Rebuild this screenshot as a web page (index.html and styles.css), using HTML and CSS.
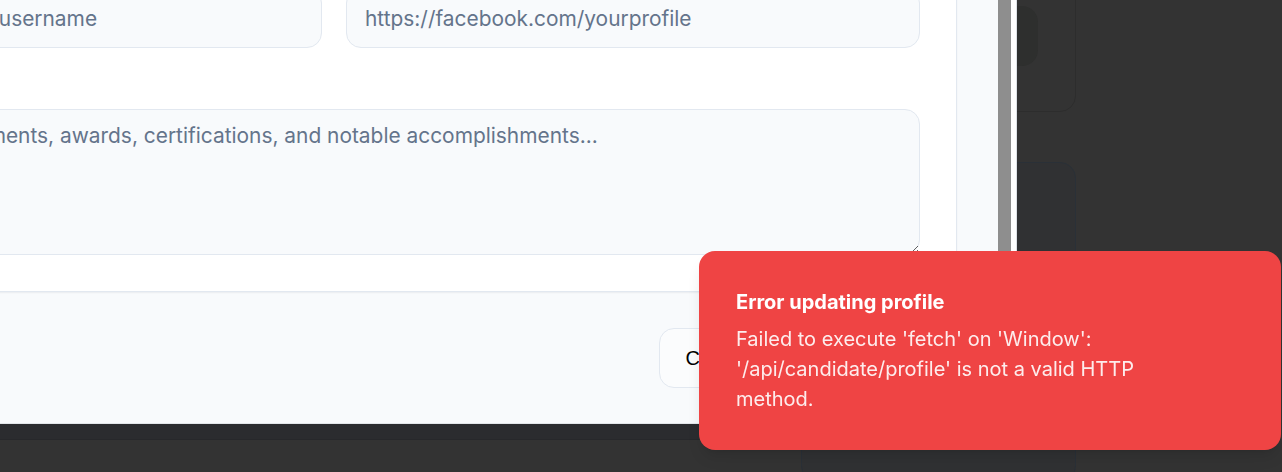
FILE: index.html
```html
<!DOCTYPE html>
<html lang="en">
<head>
<meta charset="utf-8">
<title>Edit Profile</title>
<link rel="stylesheet" href="styles.css">
</head>
<body>
<div class="page">
  <div class="page-cards">
    <div class="bg-card bg-card-top"><div class="bg-card-button"></div></div>
    <div class="bg-card bg-card-bottom"></div>
  </div>
</div>

<div class="modal-layer">
  <div class="modal">
    <div class="modal-main">
      <div class="modal-body">
        <form class="form-card">
          <div class="field-grid">
            <div class="field">
              <label class="field-label">Twitter</label>
              <input class="text-input" type="text" placeholder="https://twitter.com/yourusername">
            </div>
            <div class="field">
              <label class="field-label">Facebook</label>
              <input class="text-input" type="text" placeholder="https://facebook.com/yourprofile">
            </div>
          </div>
          <div class="field field-wide">
            <label class="field-label">Achievements</label>
            <textarea class="text-area" placeholder="Describe your achievements, awards, certifications, and notable accomplishments..."></textarea>
          </div>
        </form>
      </div>
      <div class="modal-footer">
        <button class="btn btn-outline" type="button">Cancel</button>
        <button class="btn btn-primary" type="button">Save Changes</button>
      </div>
    </div>
    <div class="scrollbar"><div class="scrollbar-thumb"></div></div>
  </div>
  <div class="modal-shadow"></div>
</div>

<div class="toast" role="alert">
  <div class="toast-title">Error updating profile</div>
  <div class="toast-desc">Failed to execute 'fetch' on 'Window': '/api/candidate/profile' is not a valid HTTP method.</div>
</div>
</body>
</html>
```

FILE: styles.css
```css
* { box-sizing: border-box; }

html, body {
  margin: 0;
  height: 100%;
}

body {
  background: #333333;
  font-family: Inter, "Noto Sans", sans-serif;
  overflow: hidden;
}

/* dimmed page behind the overlay */
.page {
  display: flex;
  padding-left: 801px;
}

.page-cards {
  width: 275px;
  margin-top: -40px;
  display: flex;
  flex-direction: column;
  gap: 50px;
}

.bg-card {
  border: 1px solid #2d2d2d;
  border-radius: 16px;
}

.bg-card-top {
  height: 152px;
  padding: 45px 37px 0 0;
  display: flex;
  justify-content: flex-end;
}

.bg-card-button {
  width: 200px;
  height: 60px;
  border-radius: 16px;
  background: #2e2f2e;
}

.bg-card-bottom {
  height: 320px;
  background: #303133;
  border-color: #2a3037;
}

/* modal */
.modal-layer {
  position: fixed;
  left: -330px;
  top: -130px;
  display: flex;
  flex-direction: column;
}

.modal {
  display: flex;
  width: 1347px;
  background: #ffffff;
  border-right: 1px solid #dde1e6;
}

.modal-main {
  flex: 1;
  display: flex;
  flex-direction: column;
  background: #f8fafc;
}

.modal-body {
  padding: 41px 41px 0 41px;
}

.form-card {
  margin: 0;
  background: #ffffff;
  border: 1px solid #e2e8f0;
  border-radius: 15px;
  padding: 36px;
  box-shadow: 0 1px 2px rgba(15, 23, 42, 0.06);
}

.field-grid {
  display: grid;
  grid-template-columns: 1fr 1fr;
  gap: 24px;
}

.field {
  display: flex;
  flex-direction: column;
}

.field-wide {
  margin-top: 21px;
}

.field-label {
  font-size: 20px;
  line-height: 30px;
  margin-bottom: 10px;
  color: #334155;
  font-weight: 500;
}

.text-input,
.text-area {
  font-family: Inter, "Noto Sans", sans-serif;
  font-size: 20.9px;
  color: #0f172a;
  background: #f8fafc;
  border: 1px solid #e2e8f0;
  border-radius: 15px;
  outline: none;
}

.text-input {
  height: 60px;
  padding: 0 18px;
}

.text-area {
  height: 146px;
  padding: 11px 18px;
  line-height: 30px;
  resize: vertical;
}

.text-input::placeholder,
.text-area::placeholder {
  color: #64748b;
  opacity: 1;
}

.modal-footer {
  display: flex;
  justify-content: flex-end;
  gap: 15px;
  padding: 36px 41px 35px 41px;
  border-bottom: 1px solid #e3e6ea;
}

.btn {
  height: 60px;
  border-radius: 15px;
  font-family: "Liberation Sans", Arial, sans-serif;
  font-size: 20px;
}

.btn-outline {
  padding: 0 26px;
  background: #fbfcfd;
  border: 1px solid #e2e8f0;
  color: #000000;
}

.btn-primary {
  padding: 0 17px;
  background: #2563eb;
  border: 1px solid #2563eb;
  color: #ffffff;
}

.scrollbar {
  width: 18px;
  background: #ffffff;
}

.scrollbar-thumb {
  width: 13px;
  height: 420px;
  background: #8e8e8e;
}

.modal-shadow {
  height: 16px;
  background: #2b2c2f;
  border-bottom: 1px solid #27282b;
}

/* toast */
.toast {
  position: fixed;
  right: 1px;
  bottom: 22px;
  width: 582px;
  padding: 37px 90px 36px 37px;
  background: #ef4444;
  border-radius: 16px;
  color: #ffffff;
  box-shadow: 0 10px 15px -3px rgba(0, 0, 0, 0.1), 0 4px 6px -4px rgba(0, 0, 0, 0.1);
}

.toast-title {
  font-size: 20px;
  line-height: 28px;
  font-weight: 700;
}

.toast-desc {
  margin-top: 8px;
  font-size: 20px;
  line-height: 30px;
  opacity: 0.9;
}
```
